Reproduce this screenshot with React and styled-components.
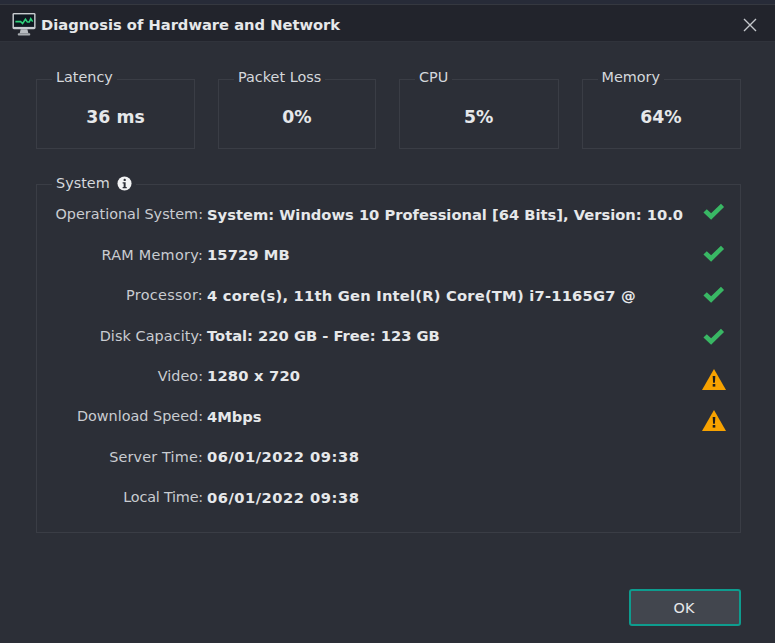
import React from "react";
import styled, { createGlobalStyle } from "styled-components";

const Global = createGlobalStyle`
  html, body { margin: 0; padding: 0; background: #2c2f37; }
  body { font-family: "DejaVu Sans", "Liberation Sans", sans-serif; }
  * { box-sizing: border-box; }
`;

const Window = styled.div`
  width: 775px;
  height: 643px;
  display: flex;
  flex-direction: column;
  background: #2c2f37;
  overflow: hidden;
`;
const TopStrip = styled.div`
  height: 5px;
  flex: none;
  background: #272b38;
  border-bottom: 1px solid #353840;
`;
const TitleBar = styled.header`
  height: 37px;
  flex: none;
  display: flex;
  align-items: center;
  padding: 3px 18px 0 12px;
  gap: 4px;
  background: #22242c;
  border-bottom: 1px solid #30333b;
`;
const Title = styled.h1`
  flex: 1;
  margin: 0;
  font-size: 14.7px;
  font-weight: 700;
  color: #e6e8ea;
  white-space: nowrap;
`;
const Content = styled.main`
  flex: 1;
  display: flex;
  flex-direction: column;
  padding: 26px 34px 17px 36px;
`;
const Stats = styled.div`
  display: grid;
  grid-template-columns: 159px 158px 159.5px 159px;
  column-gap: 23px;
`;
const Group = styled.fieldset`
  margin: 0;
  min-width: 0;
  padding: 0;
  border: 1px solid #3a3d45;
`;
const Legend = styled.legend`
  display: flex;
  align-items: center;
  gap: 7px;
  margin-left: 15px;
  padding: 0 4px;
  font-size: 14.4px;
  line-height: 22px;
  color: #d5d8dc;
  transform: translateY(${(p) => p.$lift}px);
`;
const StatValue = styled.div`
  height: 58px;
  display: flex;
  align-items: center;
  justify-content: center;
  padding-bottom: 4px;
  font-size: 17.3px;
  font-weight: 700;
  color: #e6e8ea;
`;
const SystemGroup = styled(Group)`
  margin-top: 24px;
  height: 360px;
`;
const SystemBody = styled.div`
  display: flex;
  margin-top: -4px;
`;
const Rows = styled.div`
  flex: 1;
  display: grid;
  grid-template-columns: 166px 1fr;
  grid-auto-rows: 40.45px;
  column-gap: 4px;
  padding-top: 3px;
  align-items: center;
`;
const Label = styled.div`
  text-align: right;
  font-size: 14.4px;
  color: #c9ccd1;
  white-space: nowrap;
  letter-spacing: ${(p) => p.$track || 0}px;
`;
const Value = styled.div`
  font-size: 14.7px;
  font-weight: 700;
  color: #e6e8ea;
  white-space: nowrap;
  letter-spacing: ${(p) => p.$track || 0}px;
`;
const StatusColumn = styled.div`
  flex: none;
  width: 38px;
  display: grid;
  grid-auto-rows: 41.8px;
  align-items: center;
`;
const Status = styled.div`
  display: flex;
  align-items: center;
`;
const Footer = styled.footer`
  margin-top: auto;
  display: flex;
  justify-content: flex-end;
`;
const OkButton = styled.button`
  width: 112px;
  height: 37px;
  border: 2px solid #0e9c8e;
  border-radius: 3px;
  background: #42464e;
  color: #e6e8ea;
  font-family: inherit;
  font-size: 14.4px;
  padding: 0 2px 0 0;
`;

const MonitorIcon = () => (
  <svg width="25" height="25" viewBox="0 0 26 26">
    <rect x="0.5" y="1" width="24" height="17" rx="1.5" fill="#c8ccd0" />
    <rect x="2" y="2.5" width="21" height="13" fill="#0f1820" />
    <polyline points="3.5,10 9,10 11,12 14,7.5 16,10.5 18,10.5 19.5,7 21.5,10" fill="none" stroke="#2fd07a" strokeWidth="1.6" />
    <path d="M9 18h7l1 4H8z" fill="#b8bcc0" />
    <rect x="6" y="22" width="13" height="2.5" rx="1" fill="#a8acb0" />
  </svg>
);
const CloseIcon = () => (
  <svg width="14" height="14" viewBox="0 0 14 14">
    <path d="M1 1l12 12M13 1L1 13" stroke="#c4c7cb" strokeWidth="1.4" fill="none" />
  </svg>
);
const InfoIcon = () => (
  <svg width="15" height="15" viewBox="0 0 16 16">
    <circle cx="8" cy="8" r="7.5" fill="#f2f3f4" />
    <rect x="7" y="3" width="2.4" height="2.4" rx="1" fill="#2c2f37" />
    <path d="M6 6.6h3.2v5h1.2v1.4H6v-1.4h1.1V8H6z" fill="#2c2f37" />
  </svg>
);
const CheckIcon = () => (
  <svg width="23" height="20" viewBox="0 0 24 20">
    <path d="M1.5 10.5L5 7l4.5 4.2L19.8 1.5 23 4.8 9.5 18z" fill="#39b764" />
  </svg>
);
const WarnIcon = () => (
  <svg width="24" height="21" viewBox="0 0 24 21">
    <path d="M12 0L24 21H0z" fill="#f7a200" />
    <path d="M10.7 7h2.6l-.4 6.8h-1.8z" fill="#1c1c1c" />
    <rect x="10.7" y="15" width="2.6" height="2.6" fill="#1c1c1c" />
  </svg>
);

const stats = [
  ["Latency", "36 ms"],
  ["Packet Loss", "0%"],
  ["CPU", "5%"],
  ["Memory", "64%"],
];
const rows = [
  { label: "Operational System:", value: "System: Windows 10 Professional [64 Bits], Version: 10.0" },
  { label: "RAM Memory:", value: "15729 MB", labelTrack: 0.27, valueTrack: 0.1 },
  { label: "Processor:", value: "4 core(s), 11th Gen Intel(R) Core(TM) i7-1165G7 @", labelTrack: 0.3, valueTrack: 0.22 },
  { label: "Disk Capacity:", value: "Total: 220 GB - Free: 123 GB", labelTrack: 0.08 },
  { label: "Video:", value: "1280 x 720", valueTrack: 0.2 },
  { label: "Download Speed:", value: "4Mbps" },
  { label: "Server Time:", value: "06/01/2022 09:38", labelTrack: 0.17, valueTrack: 0.5 },
  { label: "Local Time:", value: "06/01/2022 09:38", labelTrack: -0.2, valueTrack: 0.5 },
];
const statuses = ["ok", "ok", "ok", "ok", "warn", "warn"];

export default function App() {
  return (
    <Window>
      <Global />
      <TopStrip />
      <TitleBar>
        <MonitorIcon />
        <Title>Diagnosis of Hardware and Network</Title>
        <CloseIcon />
      </TitleBar>
      <Content>
        <Stats>
          {stats.map(([l, v]) => (
            <Group key={l}>
              <Legend $lift={-2}>{l}</Legend>
              <StatValue>{v}</StatValue>
            </Group>
          ))}
        </Stats>
        <SystemGroup>
          <Legend $lift={-1}>System <InfoIcon /></Legend>
          <SystemBody>
            <Rows>
              {rows.map((r) => (
                <React.Fragment key={r.label}>
                  <Label $track={r.labelTrack}>{r.label}</Label>
                  <Value $track={r.valueTrack}>{r.value}</Value>
                </React.Fragment>
              ))}
            </Rows>
            <StatusColumn>
              {statuses.map((s, i) => (
                <Status key={i}>{s === "ok" ? <CheckIcon /> : <WarnIcon />}</Status>
              ))}
            </StatusColumn>
          </SystemBody>
        </SystemGroup>
        <Footer>
          <OkButton>OK</OkButton>
        </Footer>
      </Content>
    </Window>
  );
}
